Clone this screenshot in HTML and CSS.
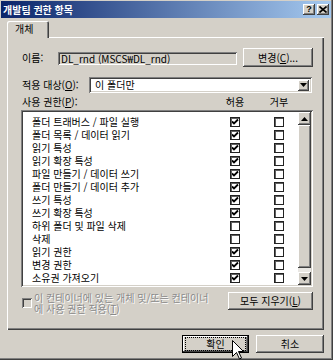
FILE: index.html
```html
<!DOCTYPE html>
<html lang="ko">
<head>
<meta charset="utf-8">
<title>개발팀 권한 항목</title>
<link rel="stylesheet" href="styles.css">
</head>
<body>
<div class="window">
  <div class="titlebar">
    <span class="title">개발팀 권한 항목</span>
    <div class="tb-buttons">
      <span class="tb-btn">?</span>
      <span class="tb-btn"><svg width="8" height="7" viewBox="0 0 8 7"><path d="M0.5 0.5 L7.5 6.5 M7.5 0.5 L0.5 6.5" stroke="#000" stroke-width="1.6"/></svg></span>
    </div>
  </div>
  <div class="client">
    <div class="tabs"><div class="tab">개체</div></div>
    <div class="panel">
      <div class="name-row">
        <span class="lbl name-lbl">이름:</span>
        <div class="field">DL_rnd (MSCS₩DL_rnd)</div>
        <button class="btn change-btn">변경(<u>C</u>)...</button>
      </div>
      <div class="apply-row">
        <span class="lbl apply-lbl">적용 대상(<u>O</u>):</span>
        <div class="combo">
          <span class="combo-text">이 폴더만</span>
          <span class="dd-btn"><svg width="7" height="4" viewBox="0 0 7 4"><path d="M0 0 H7 L3.5 4 Z" fill="#000"/></svg></span>
        </div>
      </div>
      <div class="perm-head">
        <span class="lbl">사용 권한(<u>P</u>):</span>
        <span class="colh">허용</span>
        <span></span>
        <span class="colh">거부</span>
      </div>
      <div class="list">
        <div class="rows">
          <div class="prow"><span class="ptxt">폴더 트래버스 / 파일 실행</span><span class="cb on"></span><span class="cb deny"></span></div>
          <div class="prow"><span class="ptxt">폴더 목록 / 데이터 읽기</span><span class="cb on"></span><span class="cb deny"></span></div>
          <div class="prow"><span class="ptxt">읽기 특성</span><span class="cb on"></span><span class="cb deny"></span></div>
          <div class="prow"><span class="ptxt">읽기 확장 특성</span><span class="cb on"></span><span class="cb deny"></span></div>
          <div class="prow"><span class="ptxt">파일 만들기 / 데이터 쓰기</span><span class="cb on"></span><span class="cb deny"></span></div>
          <div class="prow"><span class="ptxt">폴더 만들기 / 데이터 추가</span><span class="cb on"></span><span class="cb deny"></span></div>
          <div class="prow"><span class="ptxt">쓰기 특성</span><span class="cb on"></span><span class="cb deny"></span></div>
          <div class="prow"><span class="ptxt">쓰기 확장 특성</span><span class="cb on"></span><span class="cb deny"></span></div>
          <div class="prow"><span class="ptxt">하위 폴더 및 파일 삭제</span><span class="cb"></span><span class="cb deny"></span></div>
          <div class="prow"><span class="ptxt">삭제</span><span class="cb"></span><span class="cb deny"></span></div>
          <div class="prow"><span class="ptxt">읽기 권한</span><span class="cb on"></span><span class="cb deny"></span></div>
          <div class="prow"><span class="ptxt">변경 권한</span><span class="cb on"></span><span class="cb deny"></span></div>
          <div class="prow"><span class="ptxt">소유권 가져오기</span><span class="cb on"></span><span class="cb deny"></span></div>
        </div>
        <div class="scrollbar">
          <span class="sb-btn"><svg width="7" height="4" viewBox="0 0 7 4"><path d="M0 4 H7 L3.5 0 Z" fill="#000"/></svg></span>
          <span class="sb-thumb"></span>
          <span class="sb-track"></span>
          <span class="sb-btn"><svg width="7" height="4" viewBox="0 0 7 4"><path d="M0 0 H7 L3.5 4 Z" fill="#000"/></svg></span>
        </div>
      </div>
      <div class="bottom-row">
        <div class="inherit">
          <span class="dcb"></span>
          <span class="dtxt">
            <span class="dline">이 컨테이너에 있는 개체 및/또는 컨테이너</span>
            <span class="dline">에 사용 권한 적용(<u>T</u>)</span>
          </span>
        </div>
        <button class="btn clear-btn">모두 지우기(<u>L</u>)</button>
      </div>
    </div>
    <div class="dlg-buttons">
      <button class="btn default-btn"><span class="focus">확인</span></button>
      <button class="btn cancel-btn">취소</button>
    </div>
  </div>
  <svg class="cursor" width="13" height="20" viewBox="0 0 13 20"><path d="M0.5 0.5 V16.5 L4.5 12.5 L7.5 19 L9.5 18 L6.5 11.5 H11.5 Z" fill="#fff" stroke="#000" stroke-width="1"/></svg>
</div>
</body>
</html>
```

FILE: styles.css
```css
* { box-sizing: border-box; }
html, body { margin: 0; padding: 0; }
body {
  width: 333px;
  height: 360px;
  overflow: hidden;
  background: #d4d0c8;
  font-family: "Noto Sans CJK KR", "Noto Sans", sans-serif;
  font-size: 10px;
  line-height: 12px;
  color: #000;
}
u { text-decoration: underline; text-underline-offset: 1px; }

.window {
  position: relative;
  width: 333px;
  height: 360px;
  padding: 1px;
  background: #d4d0c8;
  box-shadow: inset -1px -1px #404040, inset -2px -2px #808080;
  display: flex;
  flex-direction: column;
}

.titlebar {
  height: 17px;
  flex: none;
  display: flex;
  align-items: center;
  justify-content: space-between;
  padding: 0 2px 0 2px;
  margin-right: 1px;
  background: linear-gradient(to right, #0a246a, #a6caf0);
  color: #fff;
  font-weight: bold;
}
.title { font-size: 10px; line-height: 12px; }
.tb-buttons { display: flex; gap: 2px; }
.tb-btn {
  width: 12px;
  height: 11px;
  background: #d4d0c8;
  box-shadow: inset -1px -1px #404040, inset 1px 1px #fff, inset -2px -2px #808080;
  display: flex;
  align-items: center;
  justify-content: center;
  color: #000;
  font-family: "Liberation Sans", sans-serif;
  font-size: 9px;
  line-height: 9px;
  font-weight: bold;
}

.client {
  flex: 1;
  display: flex;
  flex-direction: column;
  padding: 4px 7px 0 6px;
}

.tabs { height: 15px; display: flex; }
.tab {
  position: relative;
  z-index: 1;
  width: 42px;
  height: 17px;
  margin-top: -1px;
  padding-left: 8px;
  padding-top: 2px;
  background: #d4d0c8;
  border-radius: 2px 2px 0 0;
  box-shadow: inset 1px 1px #fff, inset -1px 0 #404040, inset -2px 0 #808080;
}

.panel {
  height: 293px;
  margin-right: 1px;
  padding: 11px 11px 0 14px;
  box-shadow: inset 1px 1px #fff, inset -1px -1px #404040, inset -2px -2px #808080;
  display: flex;
  flex-direction: column;
}

.lbl { padding-left: 1px; white-space: nowrap; }

.btn {
  appearance: none;
  border: 0;
  margin: 0;
  padding: 0;
  font: inherit;
  color: #000;
  background: #d4d0c8;
  height: 18px;
  display: flex;
  align-items: center;
  justify-content: center;
  box-shadow: inset -1px -1px #404040, inset 1px 1px #fff, inset -2px -2px #808080;
}

.name-row { height: 19px; display: flex; align-items: center; }
.name-lbl { width: 37px; }
.field {
  width: 179px;
  height: 13px;
  margin-top: 1px;
  padding: 0 0 0 3px;
  line-height: 13px;
  background: #d4d0c8;
  box-shadow: inset 1px 1px #808080, inset -1px -1px #fff, inset 2px 2px #404040;
  white-space: nowrap;
  overflow: hidden;
}
.change-btn { width: 70px; height: 19px; margin-left: auto; }

.apply-row { height: 16px; margin-top: 10px; display: flex; align-items: center; }
.apply-lbl { width: 68px; }
.combo {
  width: 223px;
  height: 16px;
  padding: 2px 2px 2px 2px;
  background: #fff;
  box-shadow: inset 1px 1px #808080, inset -1px -1px #fff, inset 2px 2px #404040, inset -2px -2px #d4d0c8;
  display: flex;
  align-items: center;
}
.combo-text { flex: 1; padding-left: 4px; }
.dd-btn {
  width: 11px;
  height: 11px;
  margin-right: 1px;
  background: #d4d0c8;
  box-shadow: inset -1px -1px #404040, inset 1px 1px #fff, inset -2px -2px #808080;
  display: flex;
  align-items: center;
  justify-content: center;
}

.perm-head {
  margin-top: 3px;
  height: 12px;
  display: grid;
  grid-template-columns: 199px 30px 14px 30px;
}
.colh { text-align: center; }

.list {
  margin-top: 2px;
  height: 177px;
  padding: 2px;
  background: #fff;
  box-shadow: inset 1px 1px #808080, inset -1px -1px #fff, inset 2px 2px #404040, inset -2px -2px #d4d0c8;
  display: flex;
}
.rows { flex: 1; padding-top: 3px; }
.prow {
  height: 13px;
  display: grid;
  grid-template-columns: 207px 10px 34px 10px;
  align-items: center;
}
.ptxt { padding-left: 9px; white-space: nowrap; line-height: 13px; }
.cb {
  width: 10px;
  height: 10px;
  border: 1px solid #222;
  box-shadow: inset 1px 1px #606060;
  background: #fff;
}
.cb.deny { grid-column: 4; }
.cb.on {
  background: #fff url("data:image/svg+xml,%3Csvg xmlns='http://www.w3.org/2000/svg' width='8' height='8' viewBox='0 0 8 8'%3E%3Cpath d='M1 3.5 L3 5.5 L7 1.5' fill='none' stroke='%23000' stroke-width='1.8'/%3E%3C/svg%3E") center / 8px 8px no-repeat;
}

.scrollbar {
  width: 13px;
  display: flex;
  flex-direction: column;
  background: #e9e7e3;
}
.sb-btn {
  height: 13px;
  flex: none;
  background: #d4d0c8;
  box-shadow: inset -1px -1px #404040, inset 1px 1px #fff, inset -2px -2px #808080;
  display: flex;
  align-items: center;
  justify-content: center;
}
.sb-thumb {
  flex: 1;
  background: #d4d0c8;
  box-shadow: inset -1px -1px #404040, inset 1px 1px #fff, inset -2px -2px #808080;
}
.sb-track { height: 4px; flex: none; }

.bottom-row {
  margin-top: 5px;
  height: 22px;
  display: flex;
  align-items: flex-start;
}
.inherit { display: flex; align-items: center; flex: 1; padding-left: 1px; }
.dcb {
  width: 10px;
  height: 10px;
  flex: none;
  background: #d4d0c8;
  box-shadow: inset 1px 1px #808080, inset -1px -1px #fff, inset 2px 2px #404040;
}
.dtxt {
  margin-left: 2px;
  color: #8a8a8a;
  text-shadow: 1px 1px #fff;
  white-space: nowrap;
  display: flex;
  flex-direction: column;
}
.dline { display: block; height: 11px; line-height: 11px; }
.clear-btn { width: 85px; flex: none; }

.dlg-buttons {
  margin-top: 5px;
  display: flex;
  justify-content: flex-end;
  gap: 7px;
  padding-right: 1px;
}
.default-btn {
  width: 67px;
  box-shadow: inset 0 0 0 1px #000, inset -2px -2px #404040, inset 2px 2px #fff, inset -3px -3px #808080;
}
.focus {
  width: 59px;
  height: 12px;
  outline: 1px dotted #000;
  display: flex;
  align-items: center;
  justify-content: center;
}
.cancel-btn { width: 68px; }

.cursor { position: absolute; left: 232px; top: 340px; }
```
